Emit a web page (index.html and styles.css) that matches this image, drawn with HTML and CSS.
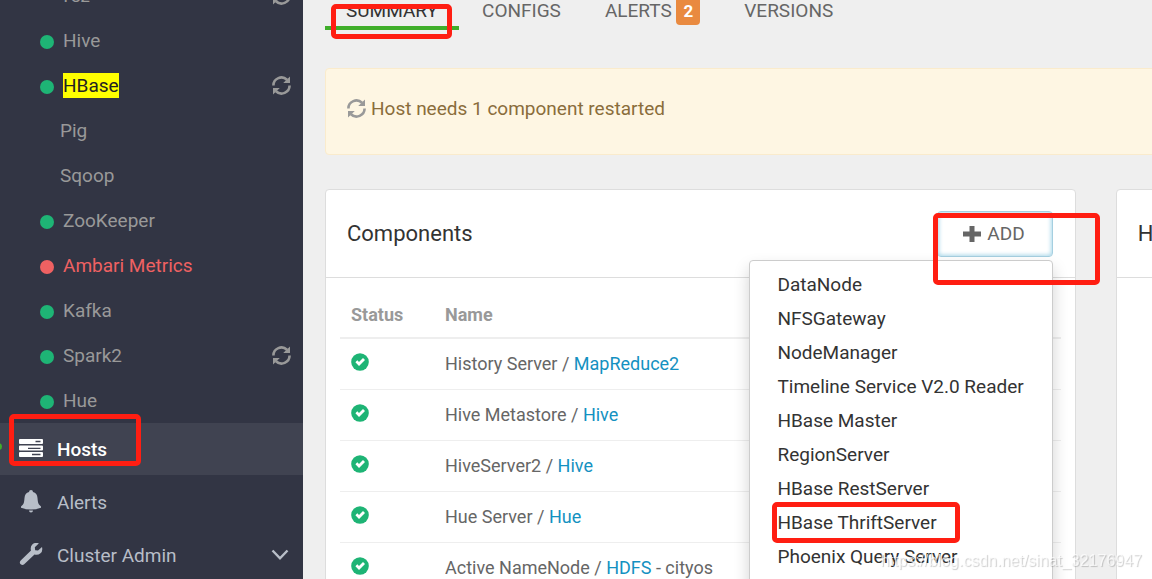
FILE: index.html
```html
<!DOCTYPE html>
<html lang="en">
<head>
    <meta charset="UTF-8">
    <meta name="viewport" content="width=device-width, initial-scale=1.0">
    <title>Ambari - Host Summary</title>
    <link rel="stylesheet" href="styles.css">
</head>
<body>
    <!-- Shared icons -->
    <svg class="icon-defs" aria-hidden="true">
        <symbol id="icon-refresh" viewBox="0 0 19 19">
            <path d="M1.4 9.4A8 8 0 0 1 15 3.8M17.6 9.6A8 8 0 0 1 4 15.2" fill="none" stroke="currentColor" stroke-width="2.6"/>
            <path d="M18 .4V7h-6.8zM1 18.6V12h6.8z" fill="currentColor"/>
        </symbol>
        <symbol id="icon-ok" viewBox="0 0 18 18">
            <circle cx="9" cy="9" r="8.8" fill="#1eb475"/>
            <path d="M4.4 9.3 6.3 7.3 8 8.9 12 4.9 14 6.9 8 12.9z" fill="#fff"/>
        </symbol>
    </svg>

    <div class="app">
        <nav class="sidebar">
            <ul class="services">
                <li class="client"><a href="#"><span class="name">Tez</span></a><svg class="restart"><use href="#icon-refresh"/></svg></li>
                <li><a href="#"><span class="dot"></span><span class="name">Hive</span></a></li>
                <li><a href="#"><span class="dot"></span><mark class="name">HBase</mark></a><svg class="restart"><use href="#icon-refresh"/></svg></li>
                <li class="client"><a href="#"><span class="name">Pig</span></a></li>
                <li class="client"><a href="#"><span class="name">Sqoop</span></a></li>
                <li><a href="#"><span class="dot"></span><span class="name">ZooKeeper</span></a></li>
                <li class="down"><a href="#"><span class="dot"></span><span class="name">Ambari Metrics</span></a></li>
                <li><a href="#"><span class="dot"></span><span class="name">Kafka</span></a></li>
                <li><a href="#"><span class="dot"></span><span class="name">Spark2</span></a><svg class="restart"><use href="#icon-refresh"/></svg></li>
                <li><a href="#"><span class="dot"></span><span class="name">Hue</span></a></li>
            </ul>
            <ul class="main-nav">
                <li class="active">
                    <a href="#">
                        <svg class="nav-icon" viewBox="0 0 24 24" fill="currentColor">
                            <path fill-rule="evenodd" d="M1 2h22q1 0 1 1v3q0 1-1 1H1Q0 7 0 6V3q0-1 1-1zm15.500 1.700v1.600h5V3.700zM1 8.500h22q1 0 1 1v3q0 1-1 1H1q-1 0-1-1v-3q0-1 1-1zm8 2.200v1.400h12.500v-1.400zM1 15h22q1 0 1 1v3q0 1-1 1H1q-1 0-1-1v-3q0-1 1-1zm12 1.800v1.400h8.500v-1.400z"/>
                        </svg>
                        <span>Hosts</span>
                    </a>
                    <span class="highlight highlight-hosts"></span>
                </li>
                <li>
                    <a href="#">
                        <svg class="nav-icon" viewBox="0 0 24 24" fill="currentColor">
                            <path d="M12 0q2 0 2 2 4.200 1.200 4.500 6 .3 5 1.500 6.500l2 2v1.200q-4 1.800-10 1.800T2 17.700v-1.200l2-2Q5.200 13 5.500 8 5.800 3.200 10 2q0-2 2-2zM10 20.500h4q0 2-2 2t-2-2z"/>
                        </svg>
                        <span>Alerts</span>
                    </a>
                </li>
                <li>
                    <a href="#">
                        <svg class="nav-icon" viewBox="0 0 24 24" fill="currentColor">
                            <path d="M20 .3 15.800 4.300 16.200 7.200 19 7.500 23 4q1 4-1.500 6.200-2.600 2.200-6 1.300L5.200 21.200q-1.700 1.500-3.500 0t0-3.700L12 7.500q-1-3.500 1.300-6T20 .3z"/>
                        </svg>
                        <span>Cluster Admin</span>
                        <svg class="chevron" viewBox="0 0 18 12"><path d="M1.500 1.500 9 9.300l7.500-7.800" fill="none" stroke="currentColor" stroke-width="2.400"/></svg>
                    </a>
                </li>
            </ul>
        </nav>

        <main class="content">
            <div class="tabs">
                <a href="#" class="active">SUMMARY<span class="highlight highlight-summary"></span></a>
                <a href="#">CONFIGS</a>
                <a href="#">ALERTS <span class="badge">2</span></a>
                <a href="#">VERSIONS</a>
            </div>

            <div class="restart-alert">
                <svg class="restart"><use href="#icon-refresh"/></svg>
                <span>Host needs 1 component restarted</span>
            </div>

            <div class="panels">
                <section class="panel">
                    <header class="panel-heading">
                        <h2>Components</h2>
                        <div class="dropdown">
                            <button type="button" class="add-btn">
                                <svg viewBox="0 0 18 18"><path d="M6.500 1h5v5.500H18v5h-6.500V17h-5v-5.500H0v-5h6.500z" fill="currentColor"/></svg>
                                ADD
                            </button>
                            <ul class="menu">
                                <li><a href="#">DataNode</a></li>
                                <li><a href="#">NFSGateway</a></li>
                                <li><a href="#">NodeManager</a></li>
                                <li><a href="#">Timeline Service V2.0 Reader</a></li>
                                <li><a href="#">HBase Master</a></li>
                                <li><a href="#">RegionServer</a></li>
                                <li><a href="#">HBase RestServer</a></li>
                                <li><a href="#">HBase ThriftServer</a><span class="highlight highlight-thrift"></span></li>
                                <li><a href="#">Phoenix Query Server</a></li>
                            </ul>
                            <span class="highlight highlight-add"></span>
                        </div>
                    </header>
                    <div class="panel-body">
                        <table>
                            <thead>
                                <tr><th class="status">Status</th><th>Name</th></tr>
                            </thead>
                            <tbody>
                                <tr><td><svg class="ok"><use href="#icon-ok"/></svg></td><td>History Server / <a href="#">MapReduce2</a></td></tr>
                                <tr><td><svg class="ok"><use href="#icon-ok"/></svg></td><td>Hive Metastore / <a href="#">Hive</a></td></tr>
                                <tr><td><svg class="ok"><use href="#icon-ok"/></svg></td><td>HiveServer2 / <a href="#">Hive</a></td></tr>
                                <tr><td><svg class="ok"><use href="#icon-ok"/></svg></td><td>Hue Server / <a href="#">Hue</a></td></tr>
                                <tr><td><svg class="ok"><use href="#icon-ok"/></svg></td><td>Active NameNode / <a href="#">HDFS</a> - cityos</td></tr>
                            </tbody>
                        </table>
                    </div>
                </section>
                <section class="panel">
                    <header class="panel-heading">
                        <h2>H</h2>
                    </header>
                </section>
            </div>
        </main>
    </div>

    <div class="watermark">https://blog.csdn.net/sinat_32176947</div>
</body>
</html>
```

FILE: styles.css
```css
* {
    margin: 0;
    padding: 0;
    box-sizing: border-box;
}

body {
    background-color: #efefef;
    color: #666;
    font-family: Roboto, "Liberation Sans", sans-serif;
    font-size: 19px;
    overflow: hidden;
}

a {
    color: inherit;
    text-decoration: none;
}

ul {
    list-style: none;
}

svg {
    flex: none;
}

.icon-defs {
    position: absolute;
    width: 0;
    height: 0;
}

.app {
    display: flex;
    height: 100vh;
    overflow: hidden;
}

/* Sidebar */
.sidebar {
    flex: none;
    width: 303px;
    background-color: #323544;
    color: #b8bec8;
}

.services {
    margin-top: -27px;
    color: #999;
}

.services li {
    display: flex;
    align-items: center;
    justify-content: space-between;
    height: 45px;
    padding: 0 12px 0 40px;
}

.services li.client {
    padding-left: 60px;
}

.services a {
    display: flex;
    align-items: center;
    gap: 9px;
}

.services .name {
    line-height: 25px;
}

mark {
    background-color: #ff0;
    color: #222;
}

.dot {
    width: 14px;
    height: 14px;
    margin-top: 2px;
    border-radius: 50%;
    background-color: #1eb475;
}

.down {
    color: #ef6162;
}

.down .dot {
    background-color: #ef6162;
}

.restart {
    width: 19px;
    height: 19px;
    color: #999;
}

.main-nav {
    display: flex;
    flex-direction: column;
    gap: 1px;
}

.main-nav li {
    position: relative;
}

.main-nav a {
    display: flex;
    align-items: center;
    gap: 14px;
    height: 52px;
    padding: 0 14px 0 19px;
}

.main-nav .active {
    background-color: #404351;
    color: #fff;
}

.main-nav .active a {
    font-weight: 500;
}

.main-nav .active::before {
    content: "";
    position: absolute;
    left: -5px;
    top: 20px;
    width: 7px;
    height: 7px;
    border-radius: 50%;
    background-color: #3fae2a;
}

.nav-icon {
    width: 24px;
    height: 24px;
}

.chevron {
    width: 18px;
    height: 12px;
    margin-left: auto;
}

/* Main content */
.content {
    flex: 1;
    min-width: 0;
    padding-left: 22px;
}

.tabs {
    display: flex;
    gap: 2px;
    margin-top: -4px;
}

.tabs a {
    position: relative;
    height: 34px;
    padding: 0 21px;
    line-height: 30px;
    border-bottom: 4px solid transparent;
}

.tabs .active {
    color: #333;
    border-color: #3fae2a;
}

.badge {
    display: inline-block;
    padding: 0 7px;
    border-radius: 4px;
    background-color: #e98a40;
    color: #fff;
    font-size: 17px;
    font-weight: bold;
    line-height: 28px;
}

.restart-alert {
    display: flex;
    align-items: center;
    gap: 5px;
    width: 141%;
    height: 87px;
    margin: 38px 0 34px;
    padding: 0 21px 6px;
    border: 1px solid #faebcc;
    border-radius: 4px;
    background-color: #fef6e3;
    color: #8a6d3b;
}

.panels {
    display: grid;
    grid-template-columns: minmax(0, 2fr) minmax(0, 1fr);
    gap: 40px;
    width: 141%;
}

.panel {
    min-height: 100vh;
    border: 1px solid #ddd;
    border-radius: 4px;
    background-color: #fff;
}

.panel-heading {
    display: flex;
    align-items: center;
    justify-content: space-between;
    height: 88px;
    padding: 0 22px 0 21px;
    border-bottom: 1px solid #ddd;
}

.panel-heading h2 {
    color: #333;
    font-size: 22px;
    font-weight: normal;
}

.panel-body {
    padding: 14px;
}

/* Components table */
table {
    width: 100%;
    border-collapse: collapse;
    font-size: 18px;
}

th,
td {
    height: 51px;
    padding: 0 11px;
    text-align: left;
    border-bottom: 1px solid #eee;
}

th {
    height: 46px;
    color: #999;
    border-bottom: 2px solid #eee;
}

.status {
    width: 94px;
}

td a {
    color: #1491c1;
}

.ok {
    display: block;
    width: 18px;
    height: 18px;
    margin-bottom: 3px;
}

/* Add component dropdown */
.dropdown {
    position: relative;
}

.add-btn {
    display: flex;
    align-items: center;
    gap: 6px;
    height: 46px;
    padding: 0 27px 0 25px;
    border: 1px solid #a5cfe0;
    border-radius: 4px;
    background-color: #fff;
    box-shadow: inset 0 0 4px 1px #a8d8ea;
    color: #666;
    font: inherit;
}

.add-btn svg {
    width: 18px;
    height: 18px;
}

.menu {
    position: absolute;
    top: 49px;
    right: 0;
    z-index: 1;
    padding: 7px 28px 30px 27px;
    border: 1px solid #ccc;
    border-radius: 4px;
    background-color: #fff;
    box-shadow: 0 8px 16px rgba(0, 0, 0, 0.18);
    color: #333;
    white-space: nowrap;
}

.menu li {
    position: relative;
}

.menu a {
    display: block;
    line-height: 34px;
}

/* Red marker boxes */
.highlight {
    position: absolute;
    z-index: 2;
    border: 5px solid #ff1e12;
    border-radius: 5px;
    pointer-events: none;
}

.highlight-hosts {
    top: -9px;
    left: 9px;
    width: 132px;
    height: 52px;
}

.highlight-summary {
    top: 8px;
    left: 6px;
    width: 121px;
    height: 35px;
}

.highlight-add {
    top: 2px;
    right: -47px;
    width: 167px;
    height: 72px;
}

.highlight-thrift {
    top: -4px;
    left: -5px;
    width: 188px;
    height: 41px;
}

.watermark {
    position: fixed;
    right: 10px;
    bottom: 9px;
    z-index: 3;
    color: rgba(255, 255, 255, 0.7);
    font-family: "Liberation Sans", sans-serif;
    font-size: 16px;
    text-shadow: 1px 1px 1px rgba(0, 0, 0, 0.2);
}
```
